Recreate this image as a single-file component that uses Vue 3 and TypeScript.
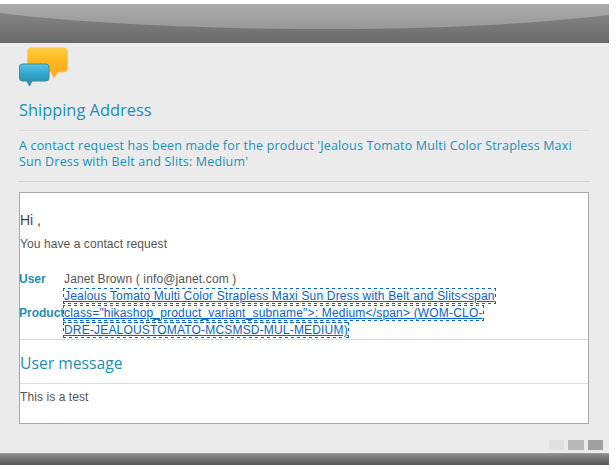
<script setup lang="ts">
const pages = ['#e0e0e0', '#b8b8b8', '#a0a0a0']
</script>

<template>
  <div class="page">
    <svg class="band" width="609" height="39" viewBox="0 0 609 39" aria-hidden="true">
      <defs>
        <linearGradient id="bandBase" x1="0" y1="0" x2="0" y2="1">
          <stop offset="0" stop-color="#8c8c8c" />
          <stop offset="1" stop-color="#6a6a6a" />
        </linearGradient>
        <linearGradient id="bandGloss" gradientUnits="userSpaceOnUse" x1="0" y1="0" x2="0" y2="30">
          <stop offset="0" stop-color="#ababab" />
          <stop offset="1" stop-color="#949494" />
        </linearGradient>
      </defs>
      <rect width="609" height="39" fill="url(#bandBase)" />
      <path d="M0 9 C60 17 170 24 300 25 C430 26 530 20 609 11 L609 0 L0 0 Z" fill="url(#bandGloss)" />
    </svg>

    <main class="content">
      <svg class="logo" width="50" height="40" viewBox="0 0 50 40" aria-hidden="true">
        <defs>
          <linearGradient id="orange" x1="0" y1="0" x2="0" y2="1">
            <stop offset="0" stop-color="#ffd040" />
            <stop offset="0.3" stop-color="#ffbd22" />
            <stop offset="1" stop-color="#fda51c" />
          </linearGradient>
          <linearGradient id="blue" x1="0" y1="0" x2="0" y2="1">
            <stop offset="0" stop-color="#57c5e6" />
            <stop offset="0.5" stop-color="#2fa3c8" />
            <stop offset="1" stop-color="#2a84a6" />
          </linearGradient>
        </defs>
        <path d="M11.5 1 H45 Q48.5 1 48.5 4.5 V21 Q48.5 25 45 25 H39 L35 31 L32 25 H11.5 Q8.5 25 8.5 21 V4.5 Q8.5 1 11.5 1 Z" fill="url(#orange)" stroke="#fcc55a" stroke-width="1" />
        <path d="M3.5 17 H27 Q30 17 30 20 V31 Q30 34 27 34 H13 L10.5 39 L8 34 H3.5 Q0.5 34 0.5 31 V20 Q0.5 17 3.5 17 Z" fill="url(#blue)" stroke="#3d8aa8" stroke-width="1" />
      </svg>

      <h1 class="title">Shipping Address</h1>
      <p class="intro">A contact request has been made for the product 'Jealous Tomato Multi Color Strapless Maxi Sun Dress with Belt and Slits: Medium'</p>

      <section class="card">
        <div class="greeting">Hi ,</div>
        <div class="lead">You have a contact request</div>

        <div class="details">
          <div class="label">User</div>
          <div class="value">Janet Brown ( info@janet.com )</div>
          <div class="label">Product</div>
          <div class="value links"><a href="#" class="link">Jealous Tomato Multi Color Strapless Maxi Sun Dress with Belt and Slits&lt;span class="hikashop_product_variant_subname"&gt;: Medium&lt;/span&gt; (WOM-CLO-DRE-JEALOUSTOMATO-MCSMSD-MUL-MEDIUM)</a></div>
        </div>

        <h2 class="subtitle">User message</h2>
        <div class="message">This is a test</div>
      </section>

      <div class="pager">
        <span v-for="c in pages" :key="c" class="dot" :style="{ background: c }"></span>
      </div>
    </main>

    <div class="foot"></div>
  </div>
</template>

<style>
html, body { background: #fff; }
</style>

<style scoped>
.page {
  width: 609px;
  padding-top: 4px;
  font-family: "Liberation Sans", Arial, sans-serif;
}
.band { display: block; }
.content {
  background: #ebebeb;
  height: 410px;
  box-sizing: border-box;
  padding: 4px 20px 0 19px;
}
.logo { display: block; }
.title {
  margin: 13px 0 0;
  font: 400 16.4px/20px "Open Sans", sans-serif;
  color: #1d8fb3;
  height: 30px;
  border-bottom: 1px solid #dcdcdc;
}
.intro {
  margin: 0;
  height: 51px;
  padding-top: 7px;
  box-sizing: border-box;
  font: 400 12.5px/16px "Open Sans", sans-serif;
  color: #1d8fb3;
  border-bottom: 1px solid #d4d4d4;
  letter-spacing: 0.17px;
  width: 570px;
}
.card {
  margin-top: 10px;
  width: 570px;
  height: 232px;
  box-sizing: border-box;
  background: #fff;
  border: 1px solid #a8a8a8;
  color: #555;
}
.greeting {
  padding-top: 19px;
  font-size: 14px;
  line-height: 17px;
  color: #444;
}
.lead {
  margin-top: 7px;
  font-size: 12px;
  line-height: 17px;
  letter-spacing: 0.08px;
}
.details {
  margin-top: 18px;
  display: grid;
  grid-template-columns: 44px 440px;
  align-items: center;
  font-size: 12px;
  line-height: 17px;
}
.value { letter-spacing: 0.14px; }
.label {
  font-weight: 700;
  color: #1d8fb3;
  margin-left: -1px;
}
.links { letter-spacing: 0.18px; }
.link {
  color: #0a63c7;
  text-decoration: underline;
  outline: 1px dotted #0a63c7;
}
.subtitle {
  margin: 0;
  height: 45px;
  box-sizing: border-box;
  border-top: 1px solid #dcdcdc;
  border-bottom: 1px solid #dcdcdc;
  padding: 12px 0 0;
  font: 400 15.7px/22px "Open Sans", sans-serif;
  color: #1d8fb3;
}
.message {
  padding-top: 5px;
  font-size: 12px;
  line-height: 17px;
  letter-spacing: 0.08px;
}
.pager {
  display: flex;
  justify-content: flex-end;
  gap: 4px;
  margin: 16px -14px 0 0;
}
.dot {
  width: 15.3px;
  height: 10px;
}
.foot {
  height: 12px;
  background: linear-gradient(#a6a6a6 0, #8a8a8a 10%, #555 100%);
}
</style>
